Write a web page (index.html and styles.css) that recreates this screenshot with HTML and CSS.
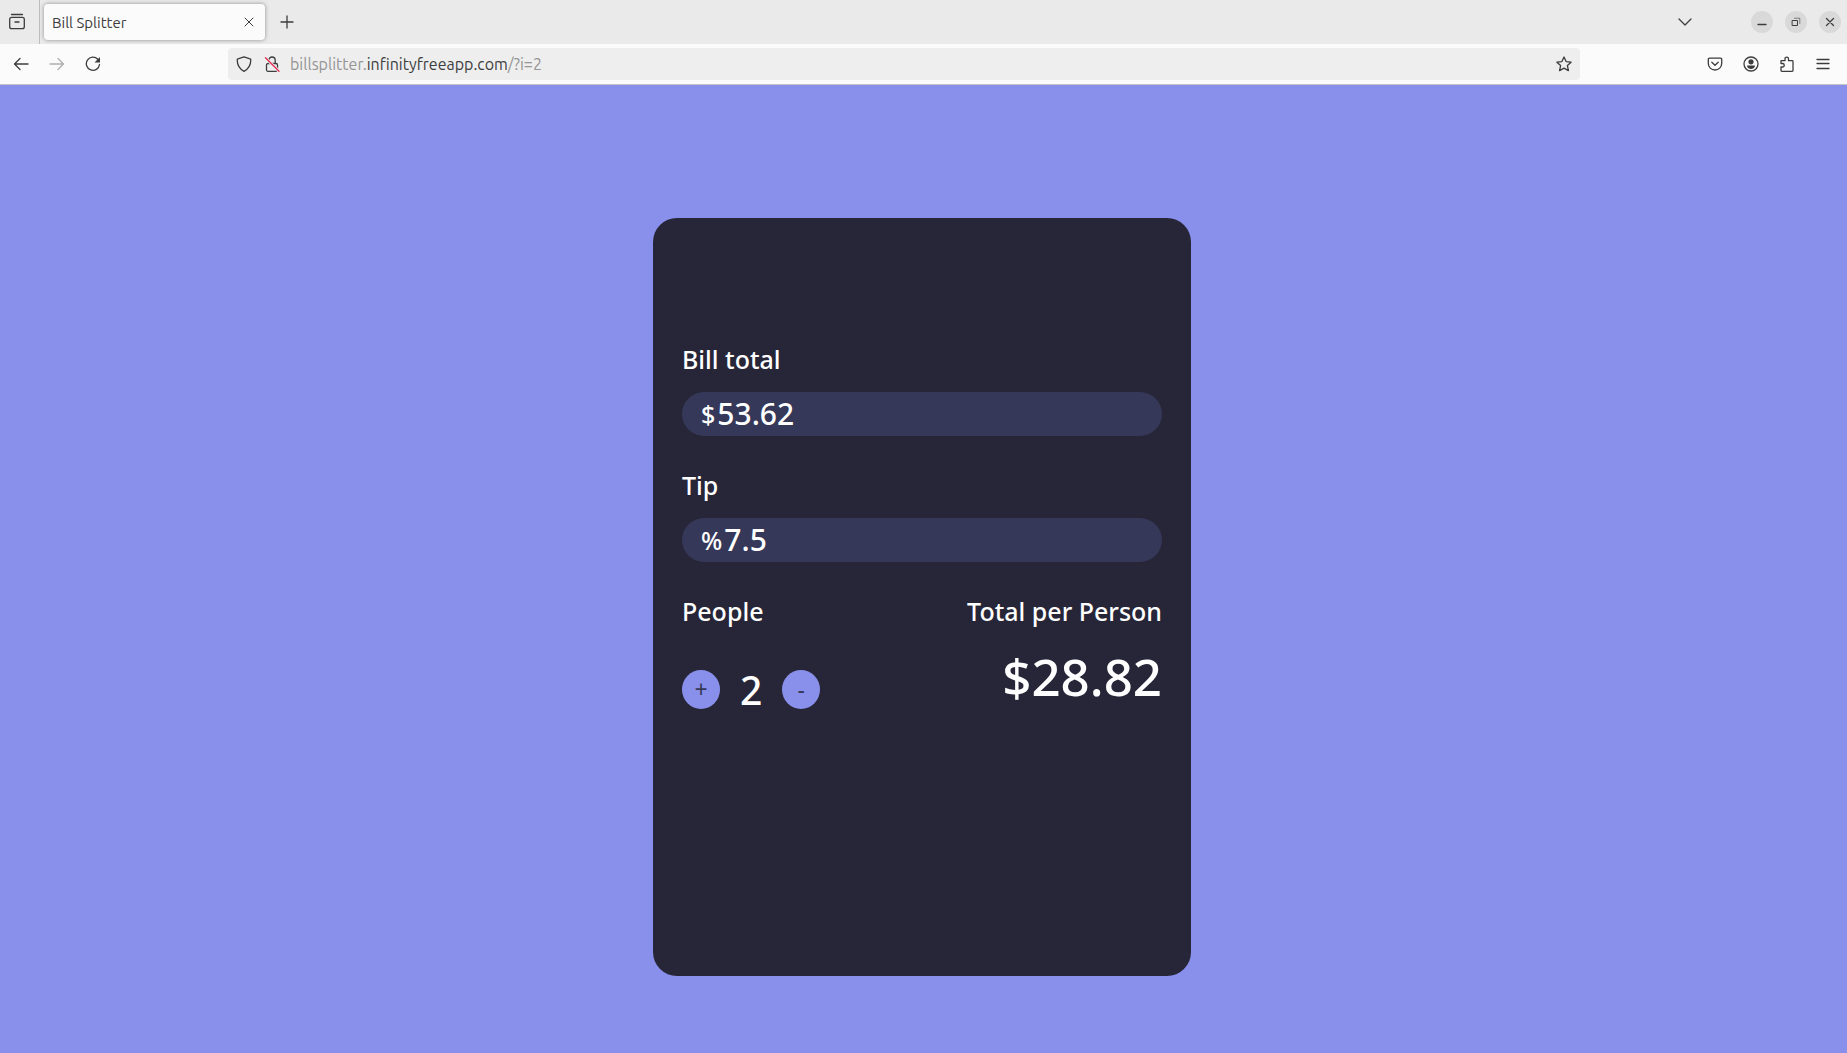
FILE: index.html
```html
<!DOCTYPE html>
<html lang="en">
<head>
<meta charset="utf-8">
<title>Bill Splitter</title>
<link rel="stylesheet" href="styles.css">
</head>
<body>
<header class="browser">
  <div class="tabbar">
    <button class="icon-btn overview" aria-label="Recent browsing">
      <svg class="icon" width="18" height="18" viewBox="0 0 18 18"><path d="M3.500 1.500h11"/><rect x="1.700" y="4.300" width="14.600" height="11.400" rx="2"/><path d="M7 9h4"/></svg>
    </button>
    <div class="tab">
      <span class="tab-title">Bill Splitter</span>
      <button class="tab-close" aria-label="Close tab">
        <svg class="icon thin" width="10" height="10" viewBox="0 0 10 10"><path d="M1 1l8 8M9 1L1 9"/></svg>
      </button>
    </div>
    <button class="icon-btn new-tab" aria-label="New tab">
      <svg class="icon" width="14" height="14" viewBox="0 0 14 14"><path d="M7 1v12M1 7h12"/></svg>
    </button>
    <button class="icon-btn all-tabs" aria-label="List all tabs">
      <svg class="icon" width="14" height="8" viewBox="0 0 14 8"><path d="M1 1l6 6 6-6"/></svg>
    </button>
    <div class="window-buttons">
      <button class="round" aria-label="Minimize"><svg class="icon" width="10" height="10" viewBox="0 0 10 10"><path d="M1 7.500h8"/></svg></button>
      <button class="round" aria-label="Restore"><svg class="icon thin" width="10" height="10" viewBox="0 0 10 10"><path d="M1.500 3.500h5v5h-5z"/><path d="M3.500 1.200h5.300v5.300" opacity=".6"/></svg></button>
      <button class="round" aria-label="Close"><svg class="icon" width="10" height="10" viewBox="0 0 10 10"><path d="M1.500 1.500l7 7M8.500 1.500l-7 7"/></svg></button>
    </div>
  </div>
  <div class="toolbar">
    <div class="tools">
      <button class="icon-btn" aria-label="Back"><svg class="icon" width="16" height="16" viewBox="0 0 16 16"><path d="M15 8H1.500M7 2.500L1.500 8 7 13.500"/></svg></button>
      <button class="icon-btn" aria-label="Forward" disabled><svg class="icon" width="16" height="16" viewBox="0 0 16 16"><path d="M1 8h13.500M9 2.500L14.500 8 9 13.500"/></svg></button>
      <button class="icon-btn" aria-label="Reload"><svg class="icon" width="16" height="16" viewBox="0 0 16 16"><path d="M12.800 3.300A6.600 6.600 0 1 0 14.500 8.500"/><path class="fill" d="M15 1v5.500H9.500z"/></svg></button>
    </div>
    <div class="urlbar">
      <button class="icon-btn url-icon" aria-label="Tracking protection"><svg class="icon" width="16" height="16" viewBox="0 0 16 16"><path d="M8 .8l6 2c.6.200.8.500.8 1C14.800 9 12.500 13 8 15.300 3.500 13 1.200 9 1.200 3.800c0-.5.2-.8.8-1z"/></svg></button>
      <button class="icon-btn url-icon" aria-label="Connection not secure"><svg class="icon" width="16" height="16" viewBox="0 0 16 16"><rect x="2.500" y="7.500" width="11" height="7.800" rx="1.500"/><path d="M4.800 7V4.200a3.200 3.200 0 0 1 6.400 0V7.500"/><path class="halo" d="M1.500 2l13.500 13"/><path class="slash" d="M1.500 1.800l13.500 13.400"/></svg></button>
      <div class="url" role="textbox" aria-label="Address" contenteditable="true" spellcheck="false">billsplitter.<span class="host">infinityfreeapp.com</span>/?i=2</div>
      <button class="icon-btn url-icon" aria-label="Bookmark"><svg class="icon" width="16" height="16" viewBox="0 0 16 16"><path d="M8 1l2.100 4.600 5 .6-3.700 3.400 1 5L8 12.100l-4.400 2.500 1-5L.9 6.200l5-.6z"/></svg></button>
    </div>
    <div class="tools tools-end">
      <button class="icon-btn" aria-label="Pocket"><svg class="icon" width="16" height="16" viewBox="0 0 16 16"><path d="M2.500 2.200h11a1.200 1.200 0 0 1 1.200 1.200V7.500a6.700 6.500 0 0 1-13.400 0V3.400a1.200 1.200 0 0 1 1.200-1.200z"/><path d="M4.800 6.300L8 9.300l3.200-3"/></svg></button>
      <button class="icon-btn" aria-label="Account"><svg class="icon" width="16" height="16" viewBox="0 0 16 16"><circle cx="8" cy="8" r="7"/><circle class="fill" cx="8" cy="5.800" r="2.600"/><path class="fill" d="M4 9.600h8c0 2.200-1.800 3.400-4 3.400s-4-1.200-4-3.400z"/></svg></button>
      <button class="icon-btn" aria-label="Extensions"><svg class="icon" width="16" height="16" viewBox="0 0 16 16"><path d="M2 14.500V11h1.500a1.700 1.700 0 0 0 0-3.500H2V4.700h4V2.800a1.700 1.700 0 0 1 3.500 0v1.900h3.700a.8.8 0 0 1 .8.800v9a.8.8 0 0 1-.8.800H2.800a.8.8 0 0 1-.8-.8z"/></svg></button>
      <button class="icon-btn" aria-label="Menu"><svg class="icon" width="16" height="16" viewBox="0 0 16 16"><path d="M2 3.500h12M2 7.500h12M2 12.500h12"/></svg></button>
    </div>
  </div>
</header>
<main class="page">
  <form class="card">
    <label class="label" for="bill">Bill total</label>
    <div class="field">
      <span class="unit">$</span>
      <input class="value" id="bill" type="text" inputmode="decimal" value="53.62">
    </div>
    <label class="label" for="tip">Tip</label>
    <div class="field">
      <span class="unit">%</span>
      <input class="value" id="tip" type="text" inputmode="decimal" value="7.5">
    </div>
    <div class="summary">
      <div>
        <div class="label">People</div>
        <div class="counter">
          <button class="step" type="button" aria-label="Add a person">+</button>
          <span class="count">2</span>
          <button class="step" type="button" aria-label="Remove a person">-</button>
        </div>
      </div>
      <div class="total">
        <div class="label">Total per Person</div>
        <div class="amount">$28.82</div>
      </div>
    </div>
  </form>
</main>
</body>
</html>
```
FILE: styles.css
```css
* { box-sizing: border-box; }

body {
  margin: 0;
  min-height: 100vh;
  display: flex;
  flex-direction: column;
  background: #8990eb;
  font-family: "Noto Sans", sans-serif;
}

button {
  border: 0;
  padding: 0;
  background: none;
  color: inherit;
  font: inherit;
}

/* Browser window */
.browser {
  color: #3d3d3d;
  font: 15px/20px Ubuntu, "Noto Sans", sans-serif;
  border-bottom: 1px solid #c4c4c4;
}

.tabbar {
  display: flex;
  align-items: center;
  height: 44px;
  padding-right: 6px;
  background: #eaeaea;
}

.icon {
  fill: none;
  stroke: currentColor;
  stroke-width: 1.3;
  stroke-linejoin: round;
  stroke-linecap: round;
}
.thin { stroke-width: 1; }
.fill {
  fill: currentColor;
  stroke: none;
}
.halo { stroke: #eeeeee; stroke-width: 3; }
.slash { stroke: #e22850; }

.icon-btn {
  display: flex;
  align-items: center;
  justify-content: center;
  width: 36px;
  height: 32px;
}
.icon-btn:disabled { color: #b0b0b0; }

.overview {
  width: 40px;
  height: 44px;
  padding-right: 6px;
  border-right: 1px solid #bdbdbd;
}

.tab {
  display: flex;
  align-items: center;
  justify-content: space-between;
  width: 221px;
  height: 36px;
  margin-left: 4px;
  padding: 0 7px 0 8px;
  border-radius: 4px;
  background: #fbfbfb;
  box-shadow: 0 0 4px rgba(0, 0, 0, .4);
}
.tab-title { padding-top: 2px; }
.tab-close {
  display: flex;
  align-items: center;
  justify-content: center;
  width: 18px;
  height: 20px;
}
.new-tab { margin-left: 4px; }
.all-tabs { margin-left: auto; }

.window-buttons {
  display: flex;
  gap: 12px;
  margin-left: 48px;
}
.round {
  display: flex;
  align-items: center;
  justify-content: center;
  width: 22px;
  height: 22px;
  border-radius: 50%;
  background: #d9d9d9;
}

.toolbar {
  display: flex;
  align-items: center;
  justify-content: space-between;
  height: 40px;
  padding: 0 6px 0 3px;
  background: #fbfbfb;
}
.tools {
  display: flex;
  flex: 0 0 225px;
}
.tools-end {
  flex-basis: 261px;
  justify-content: flex-end;
}
.urlbar {
  display: flex;
  flex: 1;
  align-items: center;
  height: 32px;
  padding: 0 2px;
  border-radius: 4px;
  background: #eeeeee;
}
.url-icon { width: 28px; }
.url {
  flex: 1;
  padding-left: 4px;
  color: #959595;
  font-size: 16px;
  white-space: nowrap;
}
.host { color: #3d3d3d; }

/* Bill splitter */
.page {
  flex: 1;
  display: flex;
  justify-content: center;
  align-items: flex-start;
  padding: 133px 19px 0 16px;
}
.card {
  width: 100%;
  max-width: 538px;
  min-height: 72vh;
  padding: 121px 29px;
  border-radius: 24px;
  background: #272638;
  color: #fff;
  font-weight: 500;
}
.label {
  display: block;
  font-size: 25px;
  line-height: 40px;
}
.field {
  display: flex;
  align-items: center;
  gap: 2px;
  height: 44px;
  margin: 13px 0 29px;
  padding: 0 19px;
  border-radius: 24px;
  background: #353858;
}
.unit {
  font-size: 25px;
  line-height: 40px;
}
.value {
  flex: 1;
  min-width: 0;
  height: 40px;
  padding: 0;
  border: 0;
  outline: 0;
  background: none;
  color: inherit;
  font: 500 30px/40px "Noto Sans", sans-serif;
}
.summary {
  display: flex;
  justify-content: space-between;
}
.counter {
  display: flex;
  align-items: center;
  gap: 20px;
  margin-top: 39px;
}
.step {
  width: 38px;
  height: 39px;
  border-radius: 50%;
  background: #8990eb;
  color: #353858;
  font-size: 23px;
  font-weight: 400;
  line-height: 39px;
}
.count {
  font-size: 39px;
  line-height: 38px;
}
.total { text-align: right; }
.amount {
  margin-top: 13px;
  font-size: 51px;
  line-height: 64px;
}
```
